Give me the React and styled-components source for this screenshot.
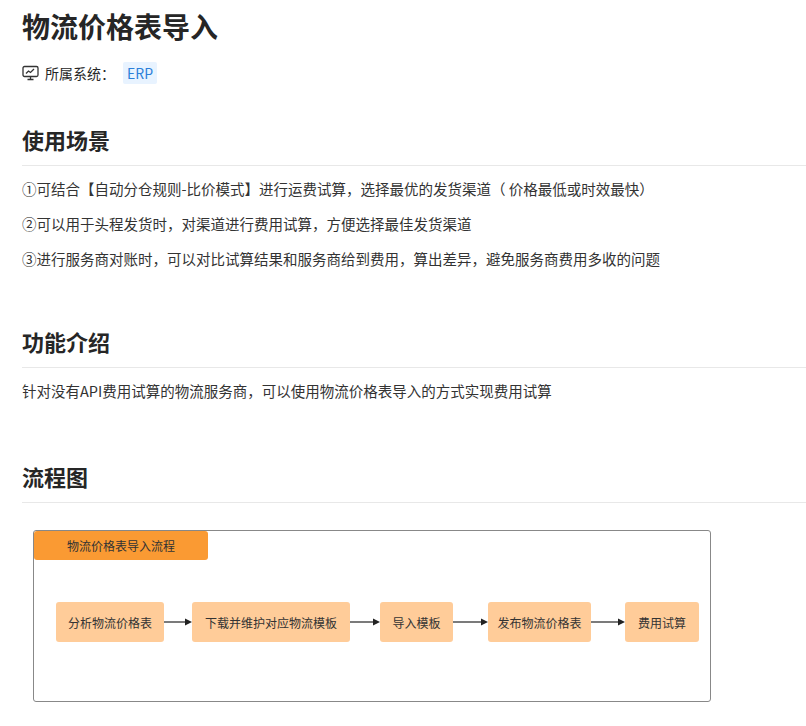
import React from "react";
import styled, { createGlobalStyle } from "styled-components";

const G = createGlobalStyle`
  body { margin: 0; background: #fff; font-family: "Noto Sans CJK SC", "Noto Sans", sans-serif; color: #262626; }
`;
const Page = styled.div` padding: 6px 0 0 22px; `;
const Title = styled.h1` margin: 0; font-size: 28px; line-height: 40px; font-weight: 700; color: #262626; `;
const Meta = styled.div` display: flex; align-items: center; gap: 6px; margin-top: 16px; font-size: 14px; `;
const Tag = styled.span` background: #e8f3ff; color: #2b7fd9; padding: 1px 4px; margin-left: 2px; border-radius: 2px; `;
const H2 = styled.h2`
  margin: ${p => p.$mt}px 0 0; font-size: 22px; line-height: 32px; font-weight: 700;
  padding-bottom: 10px; border-bottom: 1px solid #e8e8e8;
`;
const P = styled.p` margin: ${p => p.$mt}px 0 0; font-size: 14.5px; line-height: 22px; color: #333; `;
const Diagram = styled.div`
  margin: 27px 0 0 11px; width: 676px; height: 170px; border: 1px solid #888; border-radius: 3px;
  display: flex; flex-direction: column;
`;
const Tab = styled.div`
  width: 174px; height: 29px; background: #fa9a33; border-radius: 3px;
  font-size: 12px; display: flex; align-items: center; justify-content: center; color: #333;
`;
const Flow = styled.div` display: flex; align-items: center; margin: 42px 0 0 22px; `;
const Node = styled.div`
  width: ${p => p.$w}px; height: 40px; background: #ffcc99; border-radius: 3px;
  display: flex; align-items: center; justify-content: center; font-size: 12px; color: #333;
`;
const Arrow = ({ w }) => (
  <svg width={w} height="10" viewBox={`0 0 ${w} 10`}>
    <line x1="0" y1="5" x2={w - 6} y2="5" stroke="#222" strokeWidth="1.2" />
    <path d={`M${w - 7} 1.5 L${w} 5 L${w - 7} 8.5Z`} fill="#222" />
  </svg>
);
const Monitor = () => (
  <svg width="17" height="16" viewBox="0 0 17 16" fill="none" stroke="#333" strokeWidth="1.3">
    <rect x="1" y="1.5" width="15" height="10" rx="1.5" />
    <path d="M5.5 14.5h6M8.5 11.5v3M4 8.5l2.5-2.5 2 1.5 3.5-3.5" />
  </svg>
);

export default function App() {
  const nodes = [["分析物流价格表", 108, 28], ["下载并维护对应物流模板", 158, 30], ["导入模板", 73, 35], ["发布物流价格表", 103, 34], ["费用试算", 74]];
  return (
    <Page>
      <G />
      <Title>物流价格表导入</Title>
      <Meta><Monitor /><span>所属系统：</span><Tag>ERP</Tag></Meta>
      <H2 $mt={39}>使用场景</H2>
      <P $mt={12}>①可结合【自动分仓规则-比价模式】进行运费试算，选择最优的发货渠道（ 价格最低或时效最快）</P>
      <P $mt={13}>②可以用于头程发货时，对渠道进行费用试算，方便选择最佳发货渠道</P>
      <P $mt={13}>③进行服务商对账时，可以对比试算结果和服务商给到费用，算出差异，避免服务商费用多收的问题</P>
      <H2 $mt={55}>功能介绍</H2>
      <P $mt={12}>针对没有API费用试算的物流服务商，可以使用物流价格表导入的方式实现费用试算</P>
      <H2 $mt={58}>流程图</H2>
      <Diagram>
        <Tab>物流价格表导入流程</Tab>
        <Flow>
          {nodes.map(([t, w, a]) => (
            <React.Fragment key={t}>
              <Node $w={w}>{t}</Node>
              {a && <Arrow w={a} />}
            </React.Fragment>
          ))}
        </Flow>
      </Diagram>
    </Page>
  );
}
